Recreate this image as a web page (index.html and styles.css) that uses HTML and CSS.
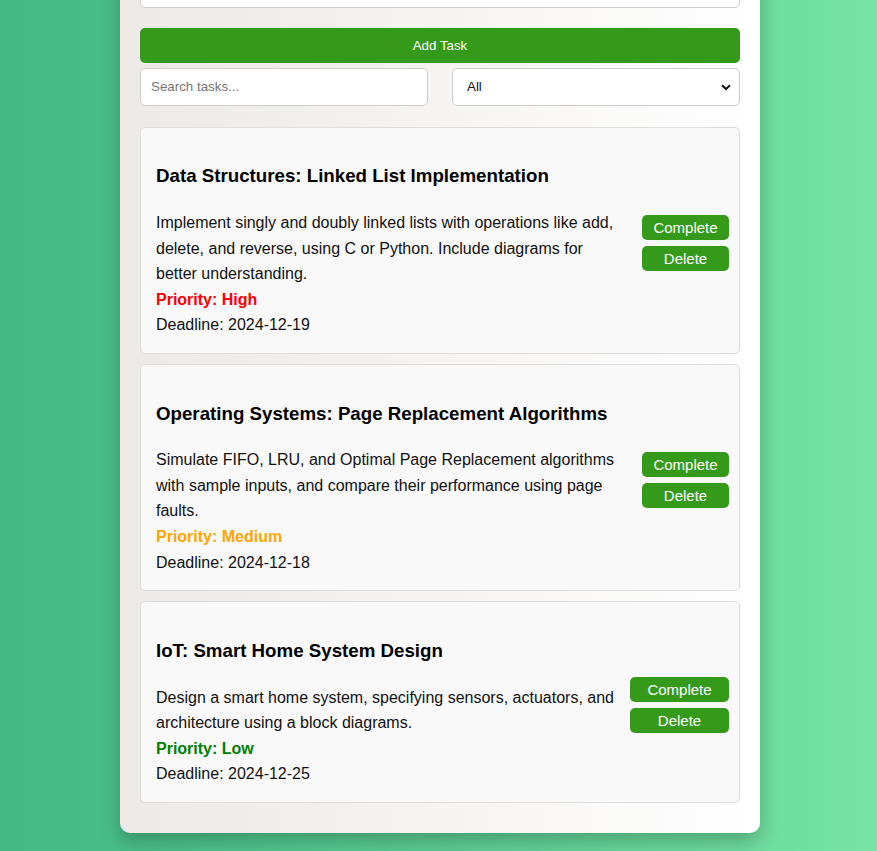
FILE: index.html
```
<!DOCTYPE html>
<html lang="en">
<head>
<meta charset="utf-8">
<title>Task Manager</title>
<link rel="stylesheet" href="styles.css">
</head>
<body>
  <div class="app">
    <h1 class="app-title">Task Manager</h1>
    <form class="task-form">
      <input class="field" type="text" placeholder="Task title">
      <textarea class="field area" placeholder="Task description"></textarea>
      <select class="field">
        <option>Low</option>
        <option>Medium</option>
        <option>High</option>
      </select>
      <input class="field last" type="text" placeholder="Deadline">
      <button type="button" class="add-btn">Add Task</button>
    </form>
    <div class="filters">
      <input class="field search" type="text" placeholder="Search tasks...">
      <div class="select-wrap">
        <select class="field filter">
          <option>All</option>
          <option>Completed</option>
          <option>Pending</option>
        </select>
        <svg class="chevron" width="10" height="7" viewBox="0 0 10 7"><path d="M1 1.2 L5 5 L9 1.2" fill="none" stroke="#111" stroke-width="2"/></svg>
      </div>
    </div>
    <div class="task-list">
      <div class="task">
        <div class="task-body">
          <h3 class="task-title">Data Structures: Linked List Implementation</h3>
          <p>Implement singly and doubly linked lists with operations like add, delete, and reverse, using C or Python. Include diagrams for better understanding.</p>
          <p class="priority high">Priority: High</p>
          <p>Deadline: 2024-12-19</p>
        </div>
        <div class="actions">
          <button type="button" class="btn">Complete</button>
          <button type="button" class="btn">Delete</button>
        </div>
      </div>
      <div class="task">
        <div class="task-body">
          <h3 class="task-title">Operating Systems: Page Replacement Algorithms</h3>
          <p>Simulate FIFO, LRU, and Optimal Page Replacement algorithms with sample inputs, and compare their performance using page faults.</p>
          <p class="priority medium">Priority: Medium</p>
          <p>Deadline: 2024-12-18</p>
        </div>
        <div class="actions">
          <button type="button" class="btn">Complete</button>
          <button type="button" class="btn">Delete</button>
        </div>
      </div>
      <div class="task">
        <div class="task-body">
          <h3 class="task-title">IoT: Smart Home System Design</h3>
          <p>Design a smart home system, specifying sensors, actuators, and architecture using a block diagrams.</p>
          <p class="priority low">Priority: Low</p>
          <p>Deadline: 2024-12-25</p>
        </div>
        <div class="actions wide">
          <button type="button" class="btn">Complete</button>
          <button type="button" class="btn">Delete</button>
        </div>
      </div>
    </div>
  </div>
</body>
</html>
```
FILE: styles.css
```
html {
  height: 100%;
}
body {
  margin: 0;
  height: 100%;
  box-sizing: border-box;
  padding: 0 0 18px 3px;
  display: flex;
  flex-direction: column;
  justify-content: flex-end;
  align-items: center;
  overflow: hidden;
  background: linear-gradient(to right, #42b883, #76e3a2);
  font-family: "Liberation Sans", Arial, sans-serif;
  color: #111;
}
.app {
  flex-shrink: 0;
  width: 640px;
  box-sizing: border-box;
  padding: 20px;
  border-radius: 10px;
  background: linear-gradient(to right, #ece9e6, #ffffff);
  box-shadow: 0 8px 20px rgba(0, 0, 0, 0.25);
}
.app-title {
  margin: 0 0 20px;
  text-align: center;
  font-size: 28px;
}
.task-form {
  display: flex;
  flex-direction: column;
}
.field {
  box-sizing: border-box;
  width: 100%;
  height: 38px;
  padding: 10px;
  border: 1px solid #ccc;
  border-radius: 5px;
  background: #fff;
  font-family: "Liberation Sans", Arial, sans-serif;
  font-size: 13.33px;
  color: #111;
  margin-bottom: 10px;
}
.field::placeholder {
  color: #757575;
}
.area {
  height: 60px;
  resize: none;
}
.field.last {
  margin-bottom: 20px;
}
.add-btn {
  height: 35px;
  border: none;
  border-radius: 5px;
  background: #359a1a;
  color: #fff;
  font-family: "Liberation Sans", Arial, sans-serif;
  font-size: 13.33px;
  margin-bottom: 5px;
}
.filters {
  display: flex;
  justify-content: space-between;
}
.filters .field {
  margin-bottom: 0;
}
.search {
  width: 48%;
}
.select-wrap {
  width: 48%;
  position: relative;
}
.filter {
  -webkit-appearance: none;
  appearance: none;
  padding-left: 14px;
}
.chevron {
  position: absolute;
  right: 9px;
  top: 16px;
}
.task-list {
  margin-top: 21px;
}
.task {
  display: flex;
  align-items: center;
  padding: 15px 10px 15px 15px;
  margin-bottom: 10px;
  background: #f9f9f9;
  border: 1px solid #ddd;
  border-radius: 5px;
}
.task-body {
  flex: 1;
  margin-right: 14px;
  line-height: 1.6;
  font-size: 16px;
}
.task-body p {
  margin: 0;
}
.task-title {
  font-size: 18.72px;
  margin: 18.72px 0;
  color: #000;
}
.priority {
  font-weight: bold;
}
.priority.high {
  color: #ff0000;
}
.priority.medium {
  color: #ffa500;
}
.priority.low {
  color: #008000;
}
.actions {
  display: flex;
  flex-direction: column;
  gap: 6px;
  width: 87px;
  margin-top: 5px;
}
.actions.wide {
  width: 99px;
}
.btn {
  height: 25px;
  padding: 0;
  border: none;
  border-radius: 5px;
  background: #359a1a;
  color: #fff;
  font-family: "Liberation Sans", Arial, sans-serif;
  font-size: 15px;
}
```
